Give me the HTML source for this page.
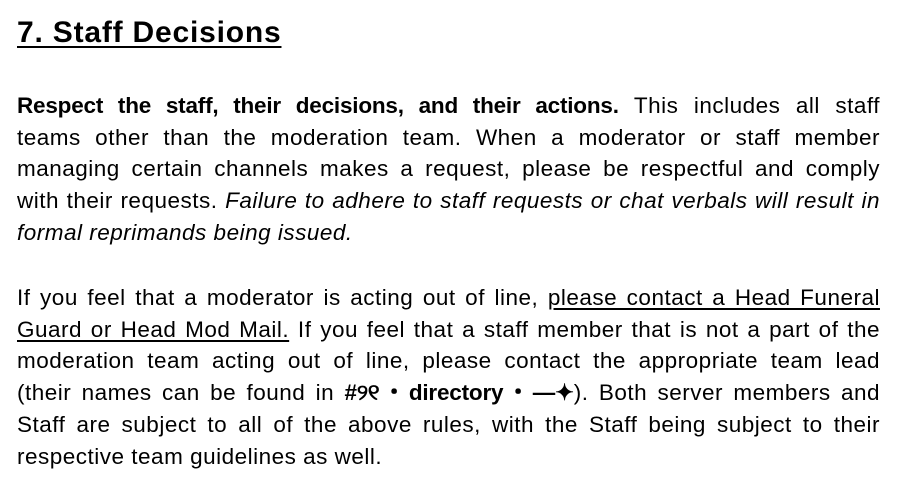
<!DOCTYPE html>
<html><head><meta charset="utf-8"><style>
body{margin:0;background:#fff;width:906px;height:484px;overflow:hidden;font-family:"Liberation Sans",Arial,sans-serif;color:#000}
h1{position:absolute;left:17px;top:16px;margin:0;font-size:30px;letter-spacing:0.8px;font-weight:bold;text-decoration:underline;text-decoration-thickness:2px;text-underline-offset:4px}
.p{position:absolute;left:17px;width:863px;margin:0;font-size:22.5px;letter-spacing:0.5px;line-height:31.7px}
.p div{text-align:justify;text-align-last:justify;white-space:nowrap}
.p div.l{text-align-last:left}
.p b{letter-spacing:-0.2px}
.p i{letter-spacing:0.5px}
u{text-underline-offset:3px}
</style></head><body>
<h1>7. Staff Decisions</h1>
<div class="p" style="top:90px">
<div><b>Respect the staff, their decisions, and their actions.</b> This includes all staff</div>
<div>teams other than the moderation team. When a moderator or staff member</div>
<div>managing certain channels makes a request, please be respectful and comply</div>
<div>with their requests. <i>Failure to adhere to staff requests or chat verbals will result in</i></div>
<div class="l"><i>formal reprimands being issued.</i></div>
</div>
<div class="p" style="top:282px">
<div>If you feel that a moderator is acting out of line, <u>please contact a Head Funeral</u></div>
<div><u>Guard or Head Mod Mail.</u> If you feel that a staff member that is not a part of the</div>
<div>moderation team acting out of line, please contact the appropriate team lead</div>
<div>(their names can be found in <b>#୨୧・directory・—✦</b>). Both server members and</div>
<div>Staff are subject to all of the above rules, with the Staff being subject to their</div>
<div class="l">respective team guidelines as well.</div>
</div>
</body></html>
